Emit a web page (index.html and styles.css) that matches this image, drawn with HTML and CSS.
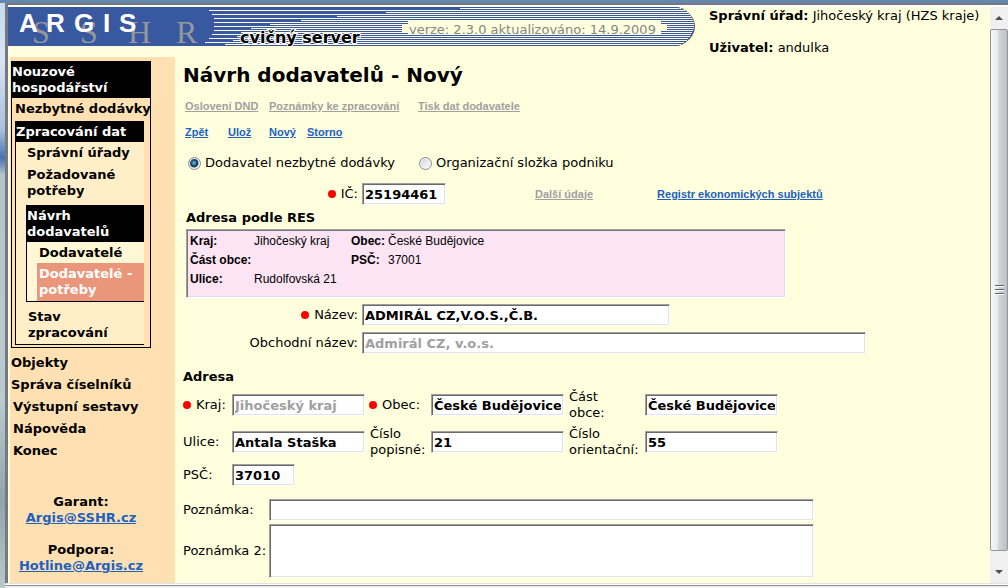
FILE: index.html
```html
<!DOCTYPE html>
<html lang="cs">
<head>
<meta charset="utf-8">
<title>ARGIS – Návrh dodavatelů</title>
<link rel="stylesheet" href="styles.css">
</head>
<body>
<div class="window">
  <div class="page">
    <header class="header">
      <svg class="banner" viewBox="0 0 687 39" role="img" aria-label="ARGIS SSHR">
        <path fill="#38599f" d="M0 0H670C680 3 687 11 687 19.500S680 36 670 39H0Z"/>
        <path fill="none" stroke="#ffffe8" shape-rendering="crispEdges" d="M452 1.500H673M201 3.500H677M378 5.500H680M204 7.500H682M329 9.500H683M206 11.500H684M293 13.500H685M206 15.500H686M262 17.500H686M206 19.500H686M243 21.500H686M206 23.500H685M233 25.500H684M204 27.500H683M229 29.500H682M201 31.500H680M225 33.500H679M197 35.500H676M217 37.500H673"/>
        <path fill="none" stroke="#9c8a28" stroke-dasharray="2 2" d="M670 .5C680 3 686.500 11 686.500 19.500S680 36 670 38.500"/>
        <path fill="#ffffde" d="M400 14H653V18H659V24H653V28H400V26H394V18H400Z"/>
        <g class="sshr"><text x="24" y="36">S</text><text x="72" y="36">S</text><text x="120" y="36">H</text><text x="168" y="36">R</text></g>
        <g class="argis"><text x="11" y="25">A</text><text x="38" y="25">R</text><text x="66" y="25">G</text><text x="95" y="25">I</text><text x="111" y="25">S</text></g>
        <text class="server" x="232" y="36">cvičný server</text>
        <text class="version" x="401" y="27">verze: 2.3.0 aktualizováno: 14.9.2009</text>
      </svg>
      <div class="user">
        <p><b>Správní úřad:</b> Jihočeský kraj (HZS kraje)</p>
        <p><b>Uživatel:</b> andulka</p>
      </div>
    </header>
    <div class="body">
      <aside class="sidebar">
        <nav>
          <section class="group">
            <h2>Nouzové hospodářství</h2>
            <a class="item" href="#">Nezbytné dodávky</a>
            <section class="group sub">
              <h2>Zpracování dat</h2>
              <a class="item deep" href="#">Správní úřady</a>
              <a class="item deep" href="#">Požadované potřeby</a>
              <section class="group leaf">
                <h2>Návrh dodavatelů</h2>
                <a class="item" href="#">Dodavatelé</a>
                <a class="item current" href="#">Dodavatelé - potřeby</a>
              </section>
              <a class="item deep last" href="#">Stav zpracování</a>
            </section>
          </section>
          <a class="top-item" href="#">Objekty</a>
          <a class="top-item" href="#">Správa číselníků</a>
          <a class="top-item indent" href="#">Výstupní sestavy</a>
          <a class="top-item indent" href="#">Nápověda</a>
          <a class="top-item indent" href="#">Konec</a>
        </nav>
        <div class="contacts">
          <p>Garant:<br><a href="mailto:Argis@SSHR.cz">Argis@SSHR.cz</a></p>
          <p>Podpora:<br><a href="mailto:Hotline@Argis.cz">Hotline@Argis.cz</a></p>
        </div>
      </aside>
      <main class="main">
        <h1>Návrh dodavatelů - Nový</h1>
        <div class="links muted"><a href="#">Oslovení DND</a><a href="#">Poznámky ke zpracování</a><a href="#">Tisk dat dodavatele</a></div>
        <div class="links actions"><a href="#">Zpět</a><a href="#">Ulož</a><a href="#">Nový</a><a href="#">Storno</a></div>
        <form>
          <div class="radios">
            <label><input type="radio" name="kind" checked>Dodavatel nezbytné dodávky</label>
            <label><input type="radio" name="kind">Organizační složka podniku</label>
          </div>
          <div class="row ident">
            <label class="req" for="ic">IČ:</label><input class="w-ic" id="ic" value="25194461">
            <div class="links"><a class="off" href="#">Další údaje</a><a href="#">Registr ekonomických subjektů</a></div>
          </div>
          <h3 class="res-title">Adresa podle RES</h3>
          <dl class="res">
            <dt>Kraj:</dt><dd>Jihočeský kraj</dd><dt>Obec:</dt><dd>České Budějovice</dd>
            <dt>Část obce:</dt><dd></dd><dt>PSČ:</dt><dd>37001</dd>
            <dt>Ulice:</dt><dd>Rudolfovská 21</dd>
          </dl>
          <div class="row"><label class="req" for="nazev">Název:</label><input class="w-name" id="nazev" value="ADMIRÁL CZ,V.O.S.,Č.B."></div>
          <div class="row"><label for="obch">Obchodní název:</label><input class="w-trade" id="obch" value="Admirál CZ, v.o.s." disabled></div>
          <h3 class="addr-title">Adresa</h3>
          <div class="address">
            <label class="req" for="kraj">Kraj:</label><input id="kraj" value="Jihočeský kraj" disabled>
            <label class="req" for="obec">Obec:</label><input id="obec" value="České Budějovice">
            <label for="cast">Část<br>obce:</label><input id="cast" value="České Budějovice">
            <label for="ulice">Ulice:</label><input id="ulice" value="Antala Staška">
            <label for="cp">Číslo popisné:</label><input id="cp" value="21">
            <label for="co">Číslo orientační:</label><input id="co" value="55">
            <label for="psc">PSČ:</label><input class="w-psc" id="psc" value="37010">
          </div>
          <div class="notes">
            <label for="p1">Poznámka:</label><input id="p1">
            <label for="p2">Poznámka 2:</label><textarea id="p2"></textarea>
          </div>
        </form>
      </main>
    </div>
  </div>
  <div class="scrollbar" aria-hidden="true">
    <svg viewBox="0 0 18 22"><path fill="#505050" d="M5 13L9 9L13 13Z"/></svg>
    <div class="thumb"><i></i><i></i><i></i></div>
    <svg viewBox="0 0 18 22"><path fill="#505050" d="M5 14L9 18L13 14Z"/></svg>
  </div>
</div>
<div class="edge"></div>
</body>
</html>
```
FILE: styles.css
```css
* { box-sizing: border-box; }
body {
  margin: 0;
  min-height: 100vh;
  display: flex;
  flex-direction: column;
  border-top: 3px solid #6487ad;
  font: 13px/16px "DejaVu Sans", Verdana, sans-serif;
  color: #000;
  background: linear-gradient(#c5d9f1 0, #d8e5f4 60px, #a9bfdc 130px, #4672b0 158px, #b5c4cc 175px, #bccbd0 400px, #8ea5ac 500px, #b8c9ca);
}
p, h1, h2, h3, dl, dd { margin: 0; }
a { color: #2061c0; }

.window {
  flex: 1;
  display: flex;
  margin-left: 5px;
  border-left: 3px solid #77797f;
  border-top: 2px solid #75777c;
}
.edge {
  height: 5px;
  margin-left: 5px;
  background: linear-gradient(#e2e2e2 1px, #fff 1px 2px, #8e8e8e 2px 3px, #f0f0f0 3px);
}
.page { flex: 1; min-width: 0; display: flex; flex-direction: column; border-top: 2px solid #fff; background: #ffffde; }

.header { display: flex; gap: 14px; height: 50px; }
.banner { flex: none; width: 687px; height: 39px; }
.user { display: grid; gap: 16px; align-content: start; padding-top: 1px; white-space: nowrap; }
.user p { height: 16px; }
.argis { font: bold 26px "Liberation Sans", sans-serif; fill: #fff; }
.sshr { font: 32px "Liberation Serif", serif; fill: #94979c; }
.server { font: 900 16px "DejaVu Sans", sans-serif; fill: #000; stroke: #fff; stroke-width: 2px; paint-order: stroke; }
.version { font-size: 13px; fill: #858585; }

.body { flex: 1; display: flex; }
.sidebar { width: 165px; flex: none; margin-left: 2px; padding: 4px 1px 0; background: #ffe0b3; font-weight: bold; }
.group { display: flex; flex-direction: column; border: 1px solid #000; }
.group h2 { padding: 2px 0; background: #000; color: #fff; font-size: 13px; line-height: 16px; }
nav > .group { width: 140px; padding-bottom: 2px; }
.sidebar nav a { color: #000; text-decoration: none; }
.item { padding: 3px 0 3px 3px; }
nav > .group > .item { white-space: nowrap; padding-bottom: 4px; }
.sub { margin: 0 6px 0 3px; border-right: 0; background: #ffeec8; }
.deep { padding-left: 11px; }
.last { padding: 7px 0 3px 12px; }
.leaf { margin: 3px 0 0 10px; border-right: 0; background: #fff7d5; }
.leaf .item { margin-left: 10px; padding: 3px 0 2px 2px; }
.sidebar nav .current { padding-bottom: 3px; background: #e9967a; color: #fff; }
.top-item { display: block; padding: 3px 0; }
.top-item:first-of-type { margin-top: 4px; }
.indent { padding-left: 2px; }
.contacts { display: grid; gap: 16px; width: 140px; margin-top: 32px; text-align: center; }

.main { flex: 1; min-width: 0; padding: 6px 8px 0; }
h1 { font-size: 20px; line-height: 24px; }
.links { display: flex; gap: 12px; font: bold 11px/16px "Liberation Sans", Arial, sans-serif; }
.muted, .actions { display: grid; gap: 0; margin-left: 2px; }
.muted { grid-template-columns: 84px 149px 1fr; margin-top: 11px; margin-bottom: 10px; }
.actions { grid-template-columns: 43px 41px 38px 1fr; }
.muted a, .actions a { justify-self: start; }
.muted a, .links .off { color: #a0a0a0; }
.radios { display: flex; gap: 24px; height: 20px; margin: 13px 0 10px 5px; }
.radios label { display: flex; align-items: center; gap: 4px; }
input[type="radio"] {
  appearance: none;
  width: 13px;
  height: 13px;
  margin: 0;
  border: 1px solid #8a8c90;
  border-radius: 50%;
  background: linear-gradient(135deg, #d0d3d6, #fff);
  box-shadow: inset 0 0 0 1px #f4f4f4;
}
input[type="radio"]:checked { background: radial-gradient(circle at 45% 45%, #6fc2e6 0, #174a6c 3px, #13344e 4px, #e4e8ec 5px); }

input:not([type="radio"]), textarea {
  display: block;
  width: 100%;
  height: 22px;
  padding: 1px 2px;
  border: 1px solid;
  border-color: #a0a0a0 #fff #fff #a0a0a0;
  border-radius: 0;
  box-shadow: inset 1px 1px #696969, inset -1px -1px #e3e3e3;
  background: #fff;
  color: #000;
  font: bold 13px/16px "DejaVu Sans", Verdana, sans-serif;
}
input:disabled { color: #a0a0a0 !important; }
.row { display: grid; grid-template-columns: 175px 1fr; column-gap: 4px; align-items: center; margin-bottom: 6px; }
.row > label { text-align: right; }
.req::before { content: ""; display: inline-block; width: 8px; height: 8px; margin-right: 5px; border-radius: 50%; background: #f00; }
.row .w-name { max-width: 308px; }
.row .w-trade { max-width: 504px; }
.row .w-ic { width: 84px; }
.ident { grid-template-columns: 175px 84px 1fr; margin-bottom: 5px; }
.ident .links { margin-left: 85px; gap: 64px; }
h3 { font-size: 13px; line-height: 16px; }
.res-title { margin-left: 3px; }
.res {
  display: grid;
  grid-template-columns: 64px 97px 37px 1fr;
  align-content: start;
  width: 600px;
  max-width: 100%;
  height: 69px;
  margin: 3px 0 6px 3px;
  padding: 2px 3px;
  border: 1px solid;
  border-color: #a0a0a0 #fff #fff #a0a0a0;
  box-shadow: inset 1px 1px #77777c, inset -1px -1px #dcdce4;
  background: #fce4f4;
  font: 12px/19px "Liberation Sans", Arial, sans-serif;
}
.res dt { font-weight: bold; white-space: nowrap; }
.addr-title { margin: 15px 0 3px; }
.address {
  display: grid;
  grid-template-columns: 49px 133px 66px 133px 81px 133px;
  grid-template-rows: 34px 34px 26px;
  row-gap: 3px;
  align-items: center;
}
.address label:nth-of-type(3n+2), .address label:nth-of-type(3n) { padding-left: 5px; }
.address .req { white-space: nowrap; }
.address label.req:nth-of-type(2) { padding-left: 4px; }
.address .w-psc { width: 63px; }
.notes { display: grid; grid-template-columns: 86px minmax(0, 545px); gap: 3px 0; align-items: center; margin-top: 11px; }
.notes label { white-space: nowrap; }
.notes textarea { height: 54px; resize: none; }

.scrollbar { width: 18px; flex: none; display: flex; flex-direction: column; border-top: 2px solid #fff; background: #f0f0f0; }
.scrollbar svg { width: 18px; height: 22px; flex: none; }
.thumb {
  flex: 1;
  display: flex;
  flex-direction: column;
  align-items: center;
  justify-content: center;
  gap: 2px;
  border: 1px solid #94969a;
  border-radius: 2px;
  background: linear-gradient(90deg, #f6f6f6, #e9e9ea 45%, #d5d6d8 46%, #bfc0c4);
}
.thumb i { width: 9px; height: 2px; background: linear-gradient(#606468 50%, #fff 50%); }
.scrollbar svg:last-child { height: 32px; }
```
